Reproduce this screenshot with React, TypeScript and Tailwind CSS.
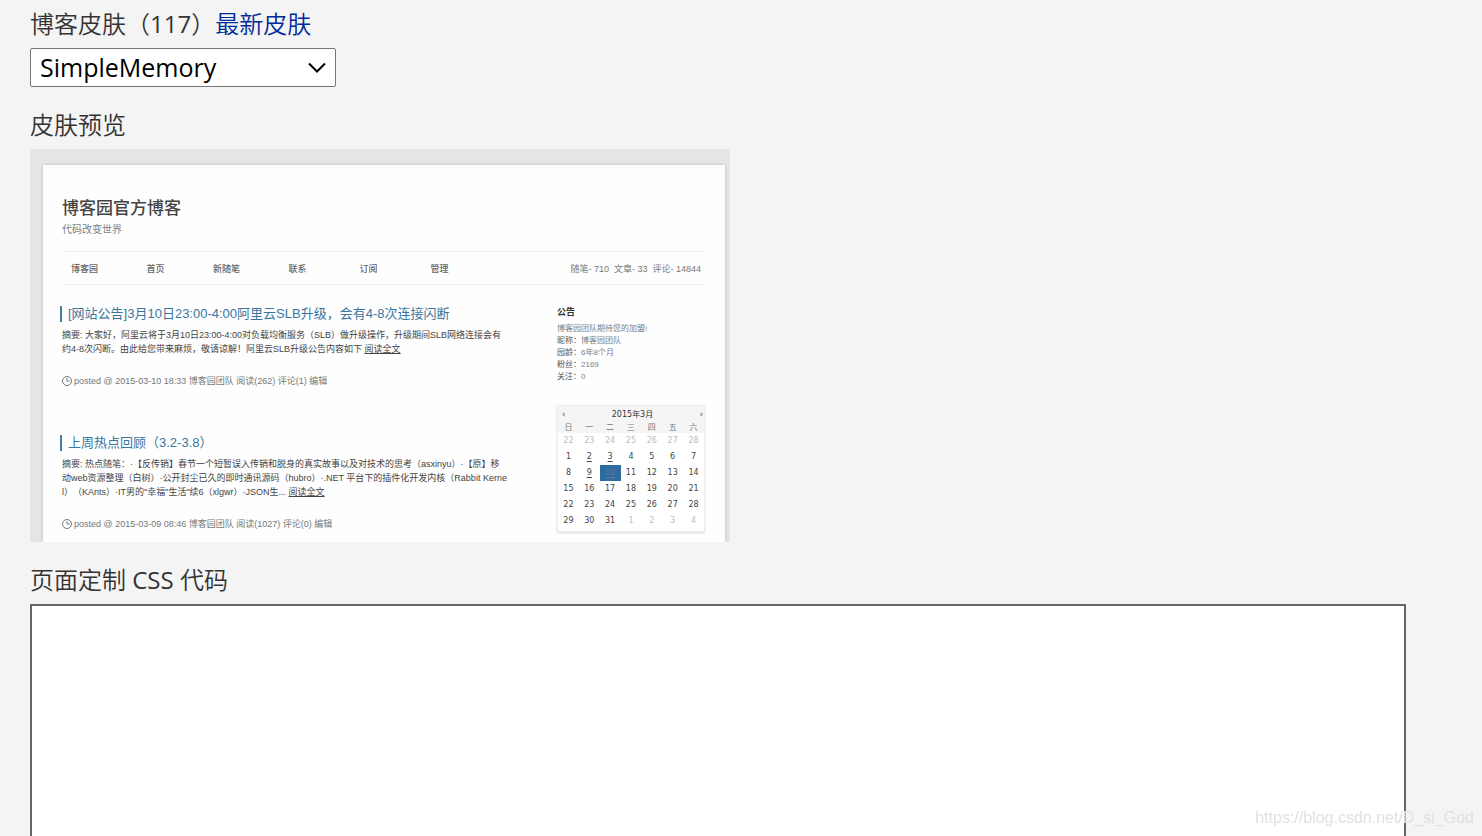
const NAV = ["博客园", "首页", "新随笔", "联系", "订阅", "管理"];

const POSTS = [
  {
    title: "[网站公告]3月10日23:00-4:00阿里云SLB升级，会有4-8次连接闪断",
    lines: [
      "摘要: 大家好，阿里云将于3月10日23:00-4:00对负载均衡服务（SLB）做升级操作，升级期间SLB网络连接会有",
      "约4-8次闪断。由此给您带来麻烦，敬请谅解！阿里云SLB升级公告内容如下 ",
    ],
    meta: "posted @ 2015-03-10 18:33 博客园团队 阅读(262) 评论(1) 编辑",
  },
  {
    title: "上周热点回顾（3.2-3.8）",
    lines: [
      "摘要: 热点随笔：·【反传销】春节一个短暂误入传销和脱身的真实故事以及对技术的思考（asxinyu）·【原】移",
      "动web资源整理（白树）·公开封尘已久的即时通讯源码（hubro）·.NET 平台下的插件化开发内核（Rabbit Kerne",
      "l）（KAnts）·IT男的\"幸福\"生活\"续6（xlgwr）·JSON生... ",
    ],
    meta: "posted @ 2015-03-09 08:46 博客园团队 阅读(1027) 评论(0) 编辑",
  },
];

const PROFILE = [
  ["昵称：", "博客园团队"],
  ["园龄：", "6年8个月"],
  ["粉丝：", "2169"],
  ["关注：", "0"],
];

const WEEKDAYS = ["日", "一", "二", "三", "四", "五", "六"];

const WEEKS = [
  [22, 23, 24, 25, 26, 27, 28],
  [1, 2, 3, 4, 5, 6, 7],
  [8, 9, 10, 11, 12, 13, 14],
  [15, 16, 17, 18, 19, 20, 21],
  [22, 23, 24, 25, 26, 27, 28],
  [29, 30, 31, 1, 2, 3, 4],
];

const LINKED_DAYS = [2, 3, 9, 10];

function dayClass(day: number, week: number) {
  const outside = (week === 0 && day > 20) || (week === 5 && day < 7);
  if (outside) return "text-[#bdbdbd]";
  if (day === 10) return "bg-[#2d6ca2] text-[#66788a]";
  return "text-[#444]";
}

function Calendar() {
  return (
    <div className="mt-[22px] border border-[#eee] bg-white pb-0.5 font-['DejaVu_Sans','Noto_Sans_CJK_SC',sans-serif] text-[8px] shadow-[0_1px_2px_rgba(0,0,0,0.15)]">
      <div className="flex h-[17px] items-center justify-between bg-[#f5f5f5] pl-1 pr-px leading-4 text-[#333]">
        <button type="button" aria-label="上个月">‹</button>
        <span>2015年3月</span>
        <button type="button" aria-label="下个月">›</button>
      </div>
      <table className="w-full table-fixed border-collapse text-center">
        <thead>
          <tr className="h-[10px] bg-[#f5f5f5] text-[#777]">
            {WEEKDAYS.map((d) => (
              <th key={d} className="p-0 font-normal leading-[10px]">{d}</th>
            ))}
          </tr>
        </thead>
        <tbody>
          {WEEKS.map((week, w) => (
            <tr key={w} className="h-4">
              {week.map((day) => (
                <td key={day} className={`p-0 leading-4 ${dayClass(day, w)}`}>
                  {w > 0 && w < 5 && LINKED_DAYS.includes(day) ? (
                    <a href="#day" className="underline underline-offset-2">{day}</a>
                  ) : (
                    day
                  )}
                </td>
              ))}
            </tr>
          ))}
        </tbody>
      </table>
    </div>
  );
}

function Post({ post }: { post: (typeof POSTS)[number] }) {
  return (
    <article>
      <h3 className="-ml-0.5 border-l-2 border-[#4380a8] pl-1.5 text-[13px] leading-4 text-[#39769f]">
        <a href="#post">{post.title}</a>
      </h3>
      <p className="mt-1.5 text-[9px] leading-[14px] text-[#444]">
        {post.lines.map((line, i) => (
          <span key={i}>
            {i > 0 && <br />}
            {line}
          </span>
        ))}
        <a href="#more" className="underline underline-offset-1">阅读全文</a>
      </p>
      <p className="mt-[18px] flex items-center gap-0.5 text-[9px] leading-[14px] text-[#777]">
        <svg width="10" height="10" viewBox="0 0 10 10" fill="none" stroke="#777" strokeWidth="1">
          <circle cx="5" cy="5" r="4.5" />
          <path d="M5 2v3h2.6" />
        </svg>
        {post.meta}
      </p>
    </article>
  );
}

function SkinPreview() {
  return (
    <div className="h-[393px] w-[700px] overflow-hidden whitespace-nowrap bg-[#e5e5e5] pl-[13px] pr-[5px] pt-4 font-['Liberation_Sans','Noto_Sans_CJK_SC',sans-serif] font-normal [text-spacing-trim:space-all]">
      <div className="h-full bg-[#fefefe] pl-[19px] pr-5 pt-8 shadow-[0_0_3px_rgba(0,0,0,0.2)]">
        <h2 className="text-[17px] font-medium leading-6 text-[#444]">博客园官方博客</h2>
        <p className="mt-0.5 text-[10px] leading-[14px] text-[#808080]">代码改变世界</p>
        <nav className="mt-[14px] flex h-[34px] items-center justify-between border-y border-[#eee] pl-[9px] pr-1 pt-0.5 text-[9px] text-[#666]">
          <div className="flex gap-11 font-medium">
            {NAV.map((item) => (
              <a key={item} href="#nav" className="w-[27px] text-center">{item}</a>
            ))}
          </div>
          <div className="flex gap-[5px] text-[#777]">
            <span>随笔- 710</span>
            <span>文章- 33</span>
            <span>评论- 14844</span>
          </div>
        </nav>
        <div className="flex justify-between">
          <div className="flex flex-col gap-[47px] pt-[21px]">
            {POSTS.map((post) => (
              <Post key={post.title} post={post} />
            ))}
          </div>
          <aside className="w-[148px] shrink-0 pt-[19px] text-[8px] leading-3 text-[#808080]">
            <h3 className="mb-[3px] text-[9px] font-bold leading-4 text-[#333]">公告</h3>
            <p>博客园团队期待您的加盟!</p>
            {PROFILE.map(([label, value]) => (
              <p key={label}>
                <span className="text-[#555]">{label}</span>
                {value}
              </p>
            ))}
            <Calendar />
          </aside>
        </div>
      </div>
    </div>
  );
}

export default function App() {
  return (
    <main className="flex h-screen flex-col overflow-hidden bg-[#f4f4f4] pl-[30px] pr-[76px] pt-2 font-['Open_Sans','Noto_Sans_CJK_SC',sans-serif] text-2xl font-[350] text-[#333]">
      <div className="flex h-8 items-center whitespace-nowrap">
        <label htmlFor="skin">
          博客皮肤（<span className="font-normal">117</span>）
        </label>
        <a href="#latest" className="text-[#002a9c]">最新皮肤</a>
      </div>
      <div className="mt-2 grid h-[39px] w-[306px] shrink-0 items-center">
        <select
          id="skin"
          className="col-start-1 row-start-1 h-[39px] w-full appearance-none rounded-xs border border-[#767676] bg-white pb-0.5 pl-[9px] text-[25px] font-normal leading-8 text-black"
        >
          <option>SimpleMemory</option>
        </select>
        <svg
          className="pointer-events-none col-start-1 row-start-1 mr-[9px] justify-self-end"
          width="20"
          height="12"
          viewBox="0 0 20 12"
          fill="none"
          stroke="#000"
          strokeWidth="2"
        >
          <path d="M2 1.5l8 8 8-8" />
        </svg>
      </div>
      <h2 className="mt-[22px] h-8 shrink-0 leading-8">皮肤预览</h2>
      <div className="mt-2 shrink-0">
        <SkinPreview />
      </div>
      <label htmlFor="css" className="mt-[22px] h-8 shrink-0 leading-8">
        页面定制 <span className="font-normal">CSS</span> 代码
      </label>
      <textarea
        id="css"
        className="mt-2 min-h-[120px] w-full flex-1 resize-none border-2 border-b-0 border-[#666] bg-white p-2 outline-none"
      />
      <span className="pointer-events-none fixed bottom-2 right-2 font-['Liberation_Sans',sans-serif] text-base font-normal leading-5 text-[#e0e0e0]">
        https://blog.csdn.net/D_si_God
      </span>
    </main>
  );
}
